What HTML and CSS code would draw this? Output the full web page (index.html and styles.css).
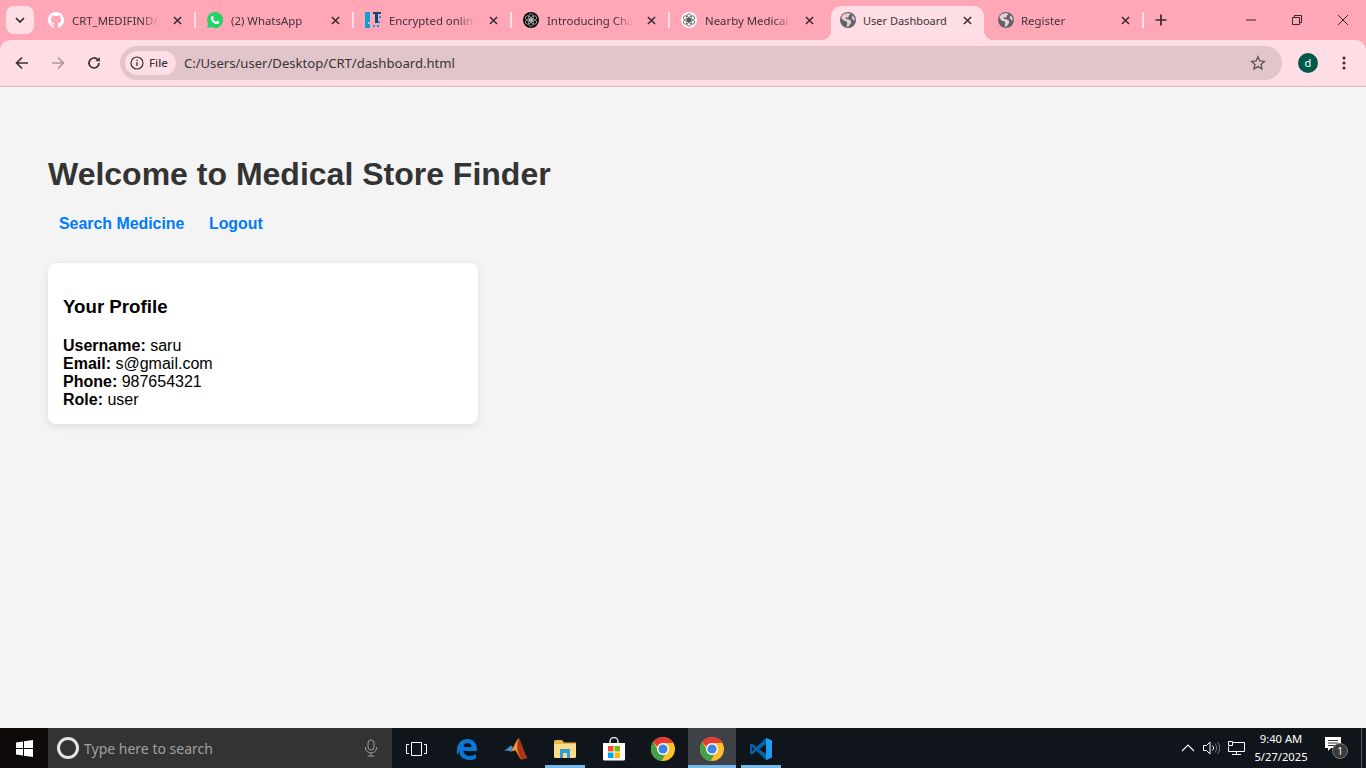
FILE: index.html
```html
<!DOCTYPE html>
<html>
    <head>
        <meta name='viewport' content='width=device-width, initial-scale=1.0'>
        <title>User Dashboard</title>
        <link rel="stylesheet" href="styles.css">
    </head>
    <body>
        <svg class="defs" width="0" height="0">
            <symbol id="globe" viewBox="0 0 16 16">
                <circle cx="8" cy="8" r="8" fill="#5f6368"/>
                <path d="M7 1.200 3 2.600 1.200 6l3 3 2.300.2.800 2.300-.8 3 1.800.3 3-4-.5-2.300-3-1.600-1.600.3-.8-1.200 1.400-.8 1.300.6 1-2.500 1.700-1.200L8 1Z" fill="#e9cfd4"/>
                <path d="m12.300 3.200 2 2.200.6 3-1.800-.4-1.400-2.200Z" fill="#e9cfd4"/>
            </symbol>
            <symbol id="close" viewBox="0 0 10 10">
                <path d="M1 1 9 9M9 1 1 9" stroke="#2f2a2c" stroke-width="1.600" fill="none"/>
            </symbol>
            <symbol id="gpt" viewBox="0 0 16 16">
                <g fill="none" stroke="#b4b4b4" stroke-width=".9">
                    <ellipse cx="8" cy="4.800" rx="2.700" ry="4"/>
                    <ellipse cx="8" cy="4.800" rx="2.700" ry="4" transform="rotate(60 8 8)"/>
                    <ellipse cx="8" cy="4.800" rx="2.700" ry="4" transform="rotate(120 8 8)"/>
                    <ellipse cx="8" cy="4.800" rx="2.700" ry="4" transform="rotate(180 8 8)"/>
                    <ellipse cx="8" cy="4.800" rx="2.700" ry="4" transform="rotate(240 8 8)"/>
                    <ellipse cx="8" cy="4.800" rx="2.700" ry="4" transform="rotate(300 8 8)"/>
                    <circle cx="8" cy="8" r="2"/>
                </g>
            </symbol>
            <symbol id="chrome" viewBox="0 0 24 24">
                <circle cx="12" cy="12" r="12" fill="#fbc02d"/>
                <path d="M12 0a12 12 0 0 1 10.400 6H12a6 6 0 0 0-5.600 3.800L2.200 5A12 12 0 0 1 12 0Z" fill="#e53935"/>
                <path d="M2.200 5 7 13.600A6 6 0 0 0 14 17.700L10.600 23.900A12 12 0 0 1 2.200 5Z" fill="#43a047"/>
                <circle cx="12" cy="12" r="6" fill="#fff"/>
                <circle cx="12" cy="12" r="4.600" fill="#3f84e5"/>
            </symbol>
        </svg>

        <div class="tabstrip">
            <div class="tab-search">
                <svg width="10" height="6" viewBox="0 0 10 6"><path d="M1 1l4 4 4-4" stroke="#2f2a2c" stroke-width="1.700" fill="none"/></svg>
            </div>
            <div class="tab first">
                <svg class="fav" viewBox="0 0 16 16"><path fill="#fff" d="M8 0C3.580 0 0 3.580 0 8c0 3.540 2.290 6.530 5.470 7.590.4.070.55-.17.55-.38 0-.19-.01-.82-.01-1.490-2.010.37-2.530-.49-2.690-.94-.09-.23-.48-.94-.82-1.130-.28-.15-.68-.52-.01-.53.63-.01 1.080.58 1.230.82.72 1.210 1.870.87 2.330.66.07-.52.28-.87.51-1.070-1.780-.2-3.640-.89-3.640-3.950 0-.87.31-1.590.82-2.150-.08-.2-.36-1.020.08-2.120 0 0 .67-.21 2.200.82.64-.18 1.320-.27 2-.27s1.360.09 2 .27c1.530-1.040 2.200-.82 2.200-.82.44 1.100.16 1.920.08 2.120.51.56.82 1.270.82 2.150 0 3.070-1.870 3.750-3.650 3.950.29.25.54.73.54 1.480 0 1.070-.01 1.930-.01 2.200 0 .21.15.46.55.38A8.010 8.010 0 0 0 16 8c0-4.420-3.580-8-8-8Z"/></svg>
                <span class="tab-title">CRT_MEDIFIND/Login</span>
                <svg class="tab-x"><use href="#close"/></svg>
            </div>
            <div class="tab">
                <svg class="fav" viewBox="0 0 16 16"><path fill="#25d366" d="M8 0a8 8 0 0 0-6.900 12L0 16l4.100-1.100A8 8 0 1 0 8 0Z"/><path fill="#fff" d="M5.600 3.800c-.3 0-.8.200-1.200.700-.4.500-.7 1.200-.6 2 .2 1.400 1.200 2.800 2.400 3.900 1.200 1 2.500 1.700 3.800 1.700.9 0 1.800-.5 2.100-1.200.2-.5.200-1 .1-1.100-.3-.3-1.700-1-2-1-.2 0-.7.800-1 1-.2.100-1-.200-1.900-1-.8-.7-1.300-1.500-1.300-1.700 0-.3.700-.7.700-1.100 0-.3-.6-1.800-.9-2.100-.2-.1-.5-.1-.2-.1Z"/></svg>
                <span class="tab-title">(2) WhatsApp</span>
                <svg class="tab-x"><use href="#close"/></svg>
            </div>
            <div class="tab">
                <svg class="fav" viewBox="0 0 16 16"><path fill="#0d9fd8" d="M0 0h5v10H3v2h2v4H0z"/><path fill="#13476e" d="M8 0h8v2h-3v9h-3V2H8z"/><path fill="#0d9fd8" d="M14 4h2v2h-2zM13 9h2v2h-2zM8 13h2v2H8zM12 13h2v2h-2z"/></svg>
                <span class="tab-title">Encrypted online notes</span>
                <svg class="tab-x"><use href="#close"/></svg>
            </div>
            <div class="tab">
                <div class="gpt-dark"><svg width="14" height="14"><use href="#gpt"/></svg></div>
                <span class="tab-title">Introducing ChatGPT</span>
                <svg class="tab-x"><use href="#close"/></svg>
            </div>
            <div class="tab">
                <div class="gpt-light"><svg width="14" height="14"><use href="#gpt"/></svg></div>
                <span class="tab-title">Nearby Medical Stores</span>
                <svg class="tab-x"><use href="#close"/></svg>
            </div>
            <div class="tab active">
                <svg class="fav"><use href="#globe"/></svg>
                <span class="tab-title">User Dashboard</span>
                <svg class="tab-x"><use href="#close"/></svg>
            </div>
            <div class="tab">
                <svg class="fav"><use href="#globe"/></svg>
                <span class="tab-title">Register</span>
                <svg class="tab-x"><use href="#close"/></svg>
            </div>
            <div class="new-tab">
                <svg width="12" height="12" viewBox="0 0 12 12"><path d="M6 .500v11M.500 6h11" stroke="#2f2a2c" stroke-width="1.700"/></svg>
            </div>
            <div class="win-btns">
                <svg width="12" height="12" viewBox="0 0 12 12"><path d="M1 6h10" stroke="#2f2a2c"/></svg>
                <svg width="12" height="12" viewBox="0 0 12 12"><path d="M1.500 3.500h7v7h-7zM3.500 3.500v-2h7v7h-2" stroke="#2f2a2c" fill="none"/></svg>
                <svg width="12" height="12" viewBox="0 0 12 12"><path d="M1 1l10 10M11 1 1 11" stroke="#2f2a2c"/></svg>
            </div>
        </div>

        <div class="toolbar">
            <svg class="nav-icon" viewBox="0 0 14 14"><path d="M13 7H2M7 1.500 1.600 7 7 12.500" stroke="#3a3234" stroke-width="1.700" fill="none"/></svg>
            <svg class="nav-icon" viewBox="0 0 14 14"><path d="M1 7h11M7 1.500 12.400 7 7 12.500" stroke="#a99aa0" stroke-width="1.700" fill="none"/></svg>
            <svg class="nav-icon" viewBox="0 0 14 14"><path d="M12 7a5 5 0 1 1-1.500-3.600" stroke="#3a3234" stroke-width="1.700" fill="none"/><path d="M12.800 1v4.300H8.500z" fill="#3a3234"/></svg>
            <div class="omnibox">
                <div class="chip">
                    <svg width="14" height="14" viewBox="0 0 14 14"><circle cx="7" cy="7" r="6" stroke="#3a3234" stroke-width="1.200" fill="none"/><path d="M7 6v4M7 3.800v1.300" stroke="#3a3234" stroke-width="1.300"/></svg>
                    <span>File</span>
                </div>
                <span class="url">C:/Users/user/Desktop/CRT/dashboard.html</span>
                <svg class="star" width="16" height="16" viewBox="0 0 16 16"><path d="M8 1.700 9.800 6l4.700.4-3.500 3 1 4.600L8 11.600 4 14l1-4.600-3.500-3L6.200 6Z" stroke="#5b5357" stroke-width="1.300" fill="none"/></svg>
            </div>
            <div class="avatar">d</div>
            <svg class="menu-dots" width="4" height="14" viewBox="0 0 4 14"><circle cx="2" cy="2" r="1.500"/><circle cx="2" cy="7" r="1.500"/><circle cx="2" cy="12" r="1.500"/></svg>
        </div>

        <main class="page">
            <h1>Welcome to Medical Store Finder</h1>
            <nav class="links">
                <a href="#">Search Medicine</a>
                <a href="#">Logout</a>
            </nav>
            <section class="card">
                <h3>Your Profile</h3>
                <p><strong>Username:</strong> saru<br>
                <strong>Email:</strong> s@gmail.com<br>
                <strong>Phone:</strong> 987654321<br>
                <strong>Role:</strong> user</p>
            </section>
        </main>

        <footer class="taskbar">
            <div class="start">
                <svg width="17" height="17" viewBox="0 0 17 17"><path fill="#fff" d="M0 2.500 7 1.500v6.500H0zM8 1.300 17 0v8H8zM0 9h7v6.500L0 14.500zM8 9h9v8L8 15.700z"/></svg>
            </div>
            <div class="search-box">
                <div class="cortana"></div>
                <span class="search-text">Type here to search</span>
                <svg class="mic" width="14" height="18" viewBox="0 0 14 18"><rect x="4" y="1" width="6" height="10" rx="3" fill="none" stroke="#9a9a9a"/><path d="M1.500 8v1a5.500 5 0 0 0 11 0V8M7 14v3M3.500 17h7" fill="none" stroke="#9a9a9a"/></svg>
            </div>
            <div class="task-icons">
                <div class="task-item">
                    <svg width="21" height="14" viewBox="0 0 21 14"><path d="M5.500 .500h10v13h-10zM3 2.500H.500v9H3M18 2.500h2.500v9H18" fill="none" stroke="#fff"/></svg>
                </div>
                <div class="task-item">
                    <svg width="22" height="22" viewBox="0 0 22 22"><path fill="#0a78d7" d="M1 11C1.500 5 6 1 11.500 1c5.500 0 9.500 4 9.500 10.500v1.500H7.500c.300 3.500 3 5 6 5 2.500 0 5-.8 6.500-2v4.500c-2 1-4.500 1.500-7 1.500C7 21.500 3 18 3.500 13 3 14 2 15.500 1 17c-.3-2-.3-4 0-6Zm6.500-2h8c0-2.500-1.500-4-4-4s-4 1.500-4 4Z"/></svg>
                </div>
                <div class="task-item">
                    <svg width="24" height="22" viewBox="0 0 24 22"><path fill="#3f93d2" d="M0 13 7 7.500 10 10 6.500 13.500 3.500 12.500Z"/><path fill="#a8381a" d="M15 0c-2 1.500-3.500 5-5 8-1 2-2.500 4-3.500 5.500 2.500-.5 4-1.500 5-.5 1.500 1.500 3 6 5.500 8.500 1.800.3 4.500-.5 6.500-1.500C20 14 18 6 15 0Z"/><path fill="#f29b2e" d="M15 0c-1.500 3-2.500 9-1 14 1 2.500 2 5 3.500 7.500-2.500-2.500-4-7-5.500-8.500-1-1-2.500 0-5 .5C8 12 9.500 10 10 8c1.500-3 3-6.500 5-8Z"/></svg>
                </div>
                <div class="task-item running">
                    <svg width="22" height="18" viewBox="0 0 22 18"><path fill="#e8b94a" d="M0 1.500A1.500 1.500 0 0 1 1.500 0H8l2 2.500h12V4H0Z"/><path fill="#f9dd8a" d="M0 4h22v12.500A1.500 1.500 0 0 1 20.500 18h-19A1.500 1.500 0 0 1 0 16.500Z"/><path fill="#2f9ed8" d="M6 9h10v9h-3v-5H9v5H6Z"/></svg>
                </div>
                <div class="task-item">
                    <svg width="24" height="24" viewBox="0 0 24 24"><path d="M8 7V4.500a4 4 0 0 1 8 0V7" fill="none" stroke="#e6e6e6" stroke-width="1.500"/><path fill="#fff" d="M1 6h22v16a1.500 1.500 0 0 1-1.500 1.500h-19A1.500 1.500 0 0 1 1 22Z"/><path fill="#f25022" d="M6 9h5.500v5.500H6z"/><path fill="#7fba00" d="M12.500 9H18v5.500h-5.500z"/><path fill="#00a4ef" d="M6 15.500h5.500V21H6z"/><path fill="#ffb900" d="M12.500 15.500H18V21h-5.500z"/></svg>
                </div>
                <div class="task-item">
                    <svg width="24" height="24"><use href="#chrome"/></svg>
                </div>
                <div class="task-item running active">
                    <svg width="24" height="24"><use href="#chrome"/></svg>
                </div>
                <div class="task-item running">
                    <svg width="24" height="24" viewBox="0 0 24 24"><path fill="#0065a9" d="M17 1 7.500 10 3 6.500 1 7.500v9l2 1L7.500 14l9.500 9 6-2.500V3.500ZM3 9.500 5.500 12 3 14.500Zm14 7.500-7-5 7-5Z"/><path fill="#1f9cf0" d="M17 1l6 2.500v17L17 23Z"/></svg>
                </div>
            </div>
            <div class="tray">
                <svg width="14" height="8" viewBox="0 0 14 8"><path d="M1 7l6-6 6 6" stroke="#fff" fill="none" stroke-width="1.100"/></svg>
                <svg width="17" height="14" viewBox="0 0 17 14"><path d="M.500 4.500h3L7 1v12L3.500 9.500h-3Z" fill="none" stroke="#fff"/><path d="M9.500 4.500a3.500 3.500 0 0 1 0 5" fill="none" stroke="#fff"/><path d="M12 2.500a7 7 0 0 1 0 9M14.500 1a9.500 9.500 0 0 1 0 12" fill="none" stroke="#777"/></svg>
                <svg width="17" height="15" viewBox="0 0 17 15"><path d="M4.500 1.500h12v9h-16v-5M8.500 10.500v3M4 13.500h9" fill="none" stroke="#fff"/><path d="M.500 .500h4v4h-4z" fill="#111" stroke="#fff"/></svg>
                <div class="clock"><span>9:40 AM</span><span>5/27/2025</span></div>
                <div class="notify">
                    <svg width="16" height="14" viewBox="0 0 16 14"><path fill="#fff" d="M0 0h16v11H6l-3 3v-3H0Z"/><path stroke="#333" d="M3 3.500h10M3 6h10M3 8.500h7"/></svg>
                    <span class="notify-count">1</span>
                </div>
                <div class="show-desktop"></div>
            </div>
        </footer>
    </body>
</html>
```

FILE: styles.css
```css
html, body {
    margin: 0;
    height: 100%;
}
body {
    display: flex;
    flex-direction: column;
    width: 1366px;
    height: 768px;
    overflow: hidden;
    background-color: #ffa7b7;
    font-family: "Liberation Sans", Arial, sans-serif;
}
.defs {
    position: absolute;
}

/* tab row */
.tabstrip {
    display: flex;
    align-items: flex-end;
    height: 40px;
    flex-shrink: 0;
    background-color: #ffa7b7;
    font-family: "Noto Sans", sans-serif;
    font-size: 11.4px;
    color: #3b3336;
}
.tab-search {
    display: flex;
    align-items: center;
    justify-content: center;
    align-self: flex-start;
    width: 28px;
    height: 28px;
    margin: 6px 4px 0 6px;
    border-radius: 8px;
    background-color: #fedee4;
}
.tab {
    position: relative;
    display: flex;
    align-items: center;
    box-sizing: border-box;
    width: 158px;
    height: 34px;
    padding: 0 11px 6px 11px;
}
.tab.first {
    padding-left: 10px;
}
.tab::after {
    content: '';
    position: absolute;
    right: 0;
    top: 6px;
    width: 2px;
    height: 16px;
    background-color: #fedee4;
}
.tab:nth-child(6)::after {
    display: none;
}
.tab.active {
    width: 153px;
    margin: 0 2px 0 3px;
    padding-left: 9px;
    padding-right: 9px;
    border-radius: 10px 10px 0 0;
    background-color: #fedee4;
}
/* the inward curves at the foot of the open tab */
.tab.active::before,
.tab.active::after {
    content: '';
    position: absolute;
    top: auto;
    bottom: 0;
    width: 10px;
    height: 10px;
}
.tab.active::before {
    left: -10px;
    background: radial-gradient(circle at 0 0, transparent 10px, #fedee4 10.5px);
}
.tab.active::after {
    right: -10px;
    background: radial-gradient(circle at 100% 0, transparent 10px, #fedee4 10.5px);
}
.active + .tab {
    padding-left: 12px;
}
.active + .tab .tab-title {
    margin-left: 7px;
}
.fav,
.gpt-dark,
.gpt-light {
    width: 16px;
    height: 16px;
    flex-shrink: 0;
}
.gpt-dark,
.gpt-light {
    display: flex;
    align-items: center;
    justify-content: center;
    border-radius: 50%;
    background-color: #0c0c0c;
}
.gpt-light {
    background-color: #fff;
}
.gpt-light svg {
    filter: brightness(0.45);
}
.tab-title {
    flex: 1;
    min-width: 0;
    margin-left: 8px;
    overflow: hidden;
    white-space: nowrap;
    -webkit-mask-image: linear-gradient(to right, #000 78%, transparent 98%);
    mask-image: linear-gradient(to right, #000 78%, transparent 98%);
}
.active .tab-title {
    margin-left: 7px;
    font-size: 11px;
    -webkit-mask-image: none;
    mask-image: none;
}
.tab-x {
    width: 9px;
    height: 9px;
    margin: 0 3px 0 12px;
    flex-shrink: 0;
}
.new-tab {
    display: flex;
    align-items: center;
    justify-content: center;
    align-self: flex-start;
    width: 28px;
    height: 28px;
    margin: 6px 0 0 3px;
}
.win-btns {
    display: flex;
    align-self: flex-start;
    gap: 34px;
    margin: 14px 17px 0 auto;
}

/* address bar */
.toolbar {
    display: flex;
    align-items: center;
    box-sizing: border-box;
    height: 47px;
    flex-shrink: 0;
    padding: 0 16px 1px 15px;
    background-color: #fedee4;
    border-bottom: 1px solid #d3bfc3;
    border-radius: 10px 10px 0 0;
}
.nav-icon {
    width: 14px;
    height: 14px;
    margin-right: 22px;
}
.omnibox {
    display: flex;
    align-items: center;
    width: 1162px;
    height: 34px;
    margin-left: -3px;
    box-sizing: border-box;
    padding: 0 16px 0 5px;
    border-radius: 17px;
    background-color: #e2c5ca;
    font-family: "Noto Sans", sans-serif;
    font-size: 13.1px;
    color: #3b3336;
}
.chip {
    display: flex;
    align-items: center;
    gap: 5px;
    height: 24px;
    padding: 0 8px 0 5px;
    border-radius: 12px;
    background-color: #fedee4;
    font-size: 11.5px;
    font-weight: 500;
}
.url {
    margin-left: 8px;
}
.star {
    margin-left: auto;
}
.avatar {
    display: flex;
    align-items: center;
    justify-content: center;
    width: 20px;
    height: 20px;
    margin-left: 16px;
    border-radius: 50%;
    background-color: #00594a;
    color: #fff;
    font-family: "Noto Sans", sans-serif;
    font-size: 11px;
}
.menu-dots {
    margin-left: 24px;
    fill: #2f2a2c;
}

/* page content */
.page {
    flex: 1;
    padding: 69px 48px 0;
    background-color: #f4f4f4;
}
.page h1 {
    margin: 0;
    font-size: 32px;
    line-height: 37px;
    color: #333;
}
.links {
    display: flex;
    gap: 24.5px;
    margin: 22px 0 0 11px;
}
.links a {
    color: #007bff;
    font-weight: bold;
    font-size: 15.9px;
    line-height: 18px;
    text-decoration: none;
}
.card {
    box-sizing: border-box;
    width: 430px;
    height: 161px;
    margin-top: 30px;
    padding: 15px;
    background-color: #fff;
    border-radius: 8px;
    box-shadow: 0 2px 8px rgba(0, 0, 0, 0.1);
}
.card h3 {
    margin: 18px 0 0;
    font-size: 18.7px;
    line-height: 22px;
    color: #000;
}
.card p {
    margin: 19px 0 0;
    font-size: 16px;
    line-height: 18px;
    color: #000;
}

/* windows taskbar */
.taskbar {
    display: flex;
    align-items: stretch;
    height: 40px;
    flex-shrink: 0;
    background-color: #10151b;
    font-family: "Noto Sans", sans-serif;
    color: #fff;
}
.start {
    display: flex;
    align-items: center;
    justify-content: center;
    width: 48px;
    background-color: #0d0a09;
}
.search-box {
    display: flex;
    align-items: center;
    box-sizing: border-box;
    width: 344px;
    padding: 0 14px 0 9px;
    background-color: #333;
}
.cortana {
    box-sizing: border-box;
    width: 22px;
    height: 22px;
    border: 3px solid #e4e4e4;
    border-radius: 50%;
}
.search-text {
    margin-left: 5px;
    font-size: 14px;
    color: #a0a0a0;
}
.mic {
    margin-left: auto;
}
.task-icons {
    display: flex;
    gap: 1px;
}
.task-item {
    position: relative;
    display: flex;
    align-items: center;
    justify-content: center;
    box-sizing: border-box;
    width: 48px;
    padding-top: 1px;
}
.task-item:first-child {
    width: 50px;
    padding-right: 2px;
}
.task-item.running::after {
    content: '';
    position: absolute;
    left: 4px;
    right: 4px;
    bottom: 0;
    height: 3px;
    background-color: #76b9ed;
}
.task-item.active {
    background-color: #3e4246;
}
.task-item.active::after {
    left: 0;
    right: 0;
}
.tray {
    display: flex;
    align-items: center;
    gap: 8px;
    margin-left: auto;
}
.clock {
    display: flex;
    flex-direction: column;
    align-items: center;
    width: 62px;
    margin-left: -3px;
    font-size: 11.2px;
    line-height: 18px;
}
.notify {
    position: relative;
    display: flex;
    margin-left: 5px;
    width: 22px;
    height: 22px;
}
.notify-count {
    position: absolute;
    left: 7px;
    top: 6px;
    width: 16px;
    height: 16px;
    box-sizing: border-box;
    border: 1px solid #777;
    border-radius: 50%;
    background-color: #3a3a3a;
    font-size: 10px;
    line-height: 14px;
    text-align: center;
}
.show-desktop {
    width: 1px;
    height: 100%;
    margin-left: 6px;
    margin-right: 4px;
    background-color: #555;
}
```
